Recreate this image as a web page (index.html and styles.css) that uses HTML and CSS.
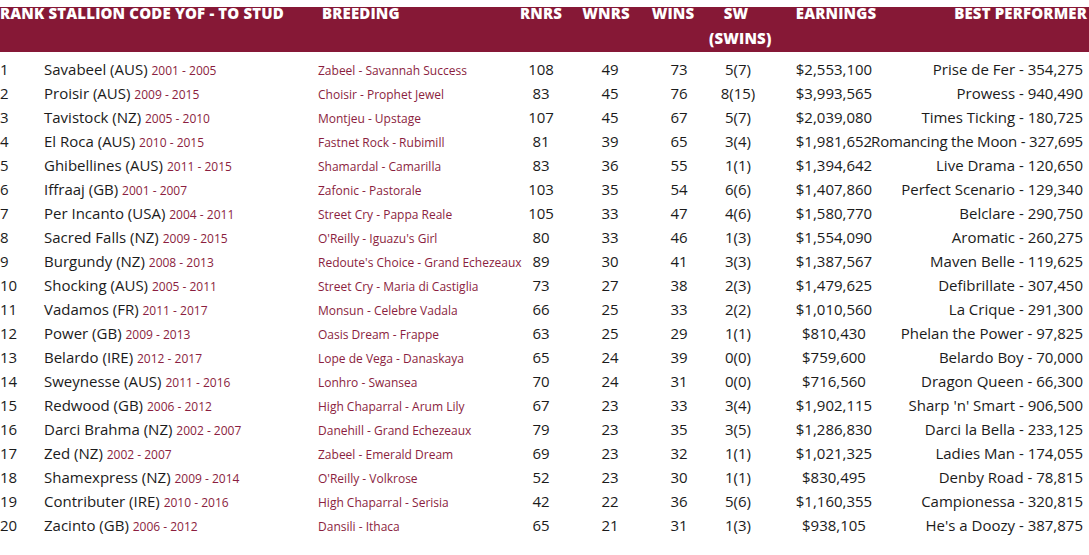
FILE: index.html
```html
<!DOCTYPE html>
<html>
<head>
<meta charset="utf-8">
<link rel="stylesheet" href="styles.css">
</head>
<body>
<div class="table">
  <div class="head">
    <div class="h h-stallion">RANK STALLION CODE YOF - TO STUD</div>
    <div class="h h-breeding">BREEDING</div>
    <div class="h h-rnrs">RNRS</div>
    <div class="h h-wnrs">WNRS</div>
    <div class="h h-wins">WINS</div>
    <div class="h h-sw">SW<br>(SWINS)</div>
    <div class="h h-earn">EARNINGS</div>
    <div class="h h-best">BEST PERFORMER</div>
  </div>
  <div class="body">
    <div class="row"><div class="c rank">1</div><div class="c stallion">Savabeel (AUS) <span class="yrs">2001 - 2005</span></div><div class="c breeding">Zabeel - Savannah Success</div><div class="c num">108</div><div class="c num">49</div><div class="c num">73</div><div class="c num">5(7)</div><div class="c num">$2,553,100</div><div class="c best"><span>Prise de Fer - 354,275</span></div></div>
    <div class="row"><div class="c rank">2</div><div class="c stallion">Proisir (AUS) <span class="yrs">2009 - 2015</span></div><div class="c breeding">Choisir - Prophet Jewel</div><div class="c num">83</div><div class="c num">45</div><div class="c num">76</div><div class="c num">8(15)</div><div class="c num">$3,993,565</div><div class="c best"><span>Prowess - 940,490</span></div></div>
    <div class="row"><div class="c rank">3</div><div class="c stallion">Tavistock (NZ) <span class="yrs">2005 - 2010</span></div><div class="c breeding">Montjeu - Upstage</div><div class="c num">107</div><div class="c num">45</div><div class="c num">67</div><div class="c num">5(7)</div><div class="c num">$2,039,080</div><div class="c best"><span>Times Ticking - 180,725</span></div></div>
    <div class="row"><div class="c rank">4</div><div class="c stallion">El Roca (AUS) <span class="yrs">2010 - 2015</span></div><div class="c breeding">Fastnet Rock - Rubimill</div><div class="c num">81</div><div class="c num">39</div><div class="c num">65</div><div class="c num">3(4)</div><div class="c num">$1,981,652</div><div class="c best"><span class="tight">Romancing the Moon - 327,695</span></div></div>
    <div class="row"><div class="c rank">5</div><div class="c stallion">Ghibellines (AUS) <span class="yrs">2011 - 2015</span></div><div class="c breeding">Shamardal - Camarilla</div><div class="c num">83</div><div class="c num">36</div><div class="c num">55</div><div class="c num">1(1)</div><div class="c num">$1,394,642</div><div class="c best"><span>Live Drama - 120,650</span></div></div>
    <div class="row"><div class="c rank">6</div><div class="c stallion">Iffraaj (GB) <span class="yrs">2001 - 2007</span></div><div class="c breeding">Zafonic - Pastorale</div><div class="c num">103</div><div class="c num">35</div><div class="c num">54</div><div class="c num">6(6)</div><div class="c num">$1,407,860</div><div class="c best"><span>Perfect Scenario - 129,340</span></div></div>
    <div class="row"><div class="c rank">7</div><div class="c stallion">Per Incanto (USA) <span class="yrs">2004 - 2011</span></div><div class="c breeding">Street Cry - Pappa Reale</div><div class="c num">105</div><div class="c num">33</div><div class="c num">47</div><div class="c num">4(6)</div><div class="c num">$1,580,770</div><div class="c best"><span>Belclare - 290,750</span></div></div>
    <div class="row"><div class="c rank">8</div><div class="c stallion">Sacred Falls (NZ) <span class="yrs">2009 - 2015</span></div><div class="c breeding">O'Reilly - Iguazu's Girl</div><div class="c num">80</div><div class="c num">33</div><div class="c num">46</div><div class="c num">1(3)</div><div class="c num">$1,554,090</div><div class="c best"><span>Aromatic - 260,275</span></div></div>
    <div class="row"><div class="c rank">9</div><div class="c stallion">Burgundy (NZ) <span class="yrs">2008 - 2013</span></div><div class="c breeding">Redoute's Choice - Grand Echezeaux</div><div class="c num">89</div><div class="c num">30</div><div class="c num">41</div><div class="c num">3(3)</div><div class="c num">$1,387,567</div><div class="c best"><span>Maven Belle - 119,625</span></div></div>
    <div class="row"><div class="c rank">10</div><div class="c stallion">Shocking (AUS) <span class="yrs">2005 - 2011</span></div><div class="c breeding">Street Cry - Maria di Castiglia</div><div class="c num">73</div><div class="c num">27</div><div class="c num">38</div><div class="c num">2(3)</div><div class="c num">$1,479,625</div><div class="c best"><span>Defibrillate - 307,450</span></div></div>
    <div class="row"><div class="c rank">11</div><div class="c stallion">Vadamos (FR) <span class="yrs">2011 - 2017</span></div><div class="c breeding">Monsun - Celebre Vadala</div><div class="c num">66</div><div class="c num">25</div><div class="c num">33</div><div class="c num">2(2)</div><div class="c num">$1,010,560</div><div class="c best"><span>La Crique - 291,300</span></div></div>
    <div class="row"><div class="c rank">12</div><div class="c stallion">Power (GB) <span class="yrs">2009 - 2013</span></div><div class="c breeding">Oasis Dream - Frappe</div><div class="c num">63</div><div class="c num">25</div><div class="c num">29</div><div class="c num">1(1)</div><div class="c num">$810,430</div><div class="c best"><span>Phelan the Power - 97,825</span></div></div>
    <div class="row"><div class="c rank">13</div><div class="c stallion">Belardo (IRE) <span class="yrs">2012 - 2017</span></div><div class="c breeding">Lope de Vega - Danaskaya</div><div class="c num">65</div><div class="c num">24</div><div class="c num">39</div><div class="c num">0(0)</div><div class="c num">$759,600</div><div class="c best"><span>Belardo Boy - 70,000</span></div></div>
    <div class="row"><div class="c rank">14</div><div class="c stallion">Sweynesse (AUS) <span class="yrs">2011 - 2016</span></div><div class="c breeding">Lonhro - Swansea</div><div class="c num">70</div><div class="c num">24</div><div class="c num">31</div><div class="c num">0(0)</div><div class="c num">$716,560</div><div class="c best"><span>Dragon Queen - 66,300</span></div></div>
    <div class="row"><div class="c rank">15</div><div class="c stallion">Redwood (GB) <span class="yrs">2006 - 2012</span></div><div class="c breeding">High Chaparral - Arum Lily</div><div class="c num">67</div><div class="c num">23</div><div class="c num">33</div><div class="c num">3(4)</div><div class="c num">$1,902,115</div><div class="c best"><span>Sharp 'n' Smart - 906,500</span></div></div>
    <div class="row"><div class="c rank">16</div><div class="c stallion">Darci Brahma (NZ) <span class="yrs">2002 - 2007</span></div><div class="c breeding">Danehill - Grand Echezeaux</div><div class="c num">79</div><div class="c num">23</div><div class="c num">35</div><div class="c num">3(5)</div><div class="c num">$1,286,830</div><div class="c best"><span>Darci la Bella - 233,125</span></div></div>
    <div class="row"><div class="c rank">17</div><div class="c stallion">Zed (NZ) <span class="yrs">2002 - 2007</span></div><div class="c breeding">Zabeel - Emerald Dream</div><div class="c num">69</div><div class="c num">23</div><div class="c num">32</div><div class="c num">1(1)</div><div class="c num">$1,021,325</div><div class="c best"><span>Ladies Man - 174,055</span></div></div>
    <div class="row"><div class="c rank">18</div><div class="c stallion">Shamexpress (NZ) <span class="yrs">2009 - 2014</span></div><div class="c breeding">O'Reilly - Volkrose</div><div class="c num">52</div><div class="c num">23</div><div class="c num">30</div><div class="c num">1(1)</div><div class="c num">$830,495</div><div class="c best"><span>Denby Road - 78,815</span></div></div>
    <div class="row"><div class="c rank">19</div><div class="c stallion">Contributer (IRE) <span class="yrs">2010 - 2016</span></div><div class="c breeding">High Chaparral - Serisia</div><div class="c num">42</div><div class="c num">22</div><div class="c num">36</div><div class="c num">5(6)</div><div class="c num">$1,160,355</div><div class="c best"><span>Campionessa - 320,815</span></div></div>
    <div class="row"><div class="c rank">20</div><div class="c stallion">Zacinto (GB) <span class="yrs">2006 - 2012</span></div><div class="c breeding">Dansili - Ithaca</div><div class="c num">65</div><div class="c num">21</div><div class="c num">31</div><div class="c num">1(3)</div><div class="c num">$938,105</div><div class="c best"><span>He's a Doozy - 387,875</span></div></div>
  </div>
</div>
</body>
</html>
```
FILE: styles.css
```css
html, body {
  margin: 0;
  padding: 0;
  background: #ffffff;
}
body {
  font-family: "Open Sans", "Liberation Sans", sans-serif;
  color: #1b1b1b;
  width: 1089px;
  height: 555px;
  overflow: hidden;
}
.table {
  padding-top: 7px;
}
.head, .row {
  display: grid;
  grid-template-columns: 44px 274px 193px 60px 78px 60px 58px 134px 182px 6px;
}
.head {
  background: #861836;
  height: 45px;
  color: #ffffff;
  font-weight: 800;
  font-size: 15px;
  letter-spacing: 0.15px;
  line-height: 25px;
  white-space: nowrap;
}
.h {
  margin-top: -6px;
  text-align: center;
}
.h-stallion {
  grid-column: 1 / 3;
  text-align: left;
}
.h-breeding {
  text-align: left;
  padding-left: 4px;
}
.h-wnrs { padding-right: 8px; }
.h-wins { padding-right: 12px; }
.h-sw { padding-right: 4px; }
.h-earn { padding-left: 4px; }
.h-best {
  grid-column: 9 / 11;
  text-align: right;
  padding-right: 2px;
}
.body {
  padding-top: 5px;
}
.row {
  height: 24px;
  line-height: 24px;
  align-items: baseline;
  font-size: 15px;
  white-space: nowrap;
}
.rank { text-align: left; }
.stallion { text-align: left; }
.yrs {
  color: #8b1e40;
  font-size: 12px;
}
.breeding {
  color: #8b1e40;
  font-size: 12px;
}
.num { text-align: center; }
.best {
  display: flex;
  justify-content: flex-end;
}
.tight {
  letter-spacing: -0.2px;
}
```
